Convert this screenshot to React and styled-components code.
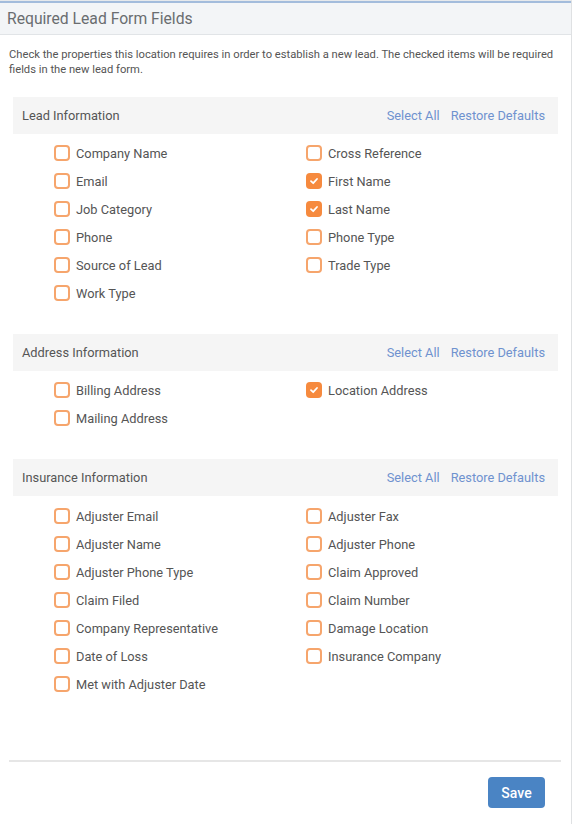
import React from "react";
import styled, { createGlobalStyle } from "styled-components";

const Global = createGlobalStyle`
  html, body { margin: 0; padding: 0; background: #fff; }
  body { font-family: Roboto, "Noto Sans", Arial, sans-serif; }
  * { box-sizing: border-box; }
`;

const Panel = styled.div`
  width: 572px;
  min-height: 824px;
  border-right: 1px solid #dfe1e3;
  border-top: 1px solid #e6e9ec;
  background: #fff;
`;

const Header = styled.div`
  border-top: 2px solid #a3bcdc;
  background: #f3f5f7;
  border-bottom: 1px solid #e1e4e7;
  height: 34px;
  display: flex;
  align-items: center;
  padding-left: 7px;
`;

const Title = styled.h2`
  margin: 0;
  font-size: 15.7px;
  font-weight: 400;
  color: #6a6d70;
`;

const Description = styled.p`
  margin: 12px 0 0;
  padding: 0 9px;
  font-size: 11.2px;
  line-height: 15px;
  color: #555;
`;

const Body = styled.div`
  padding: 0 13px;
`;

const Section = styled.section`
  margin-top: ${(p) => p.$top}px;
`;

const Band = styled.div`
  height: 37px;
  background: #f5f5f5;
  display: flex;
  align-items: center;
  padding: 0 13px 0 9px;
`;

const BandTitle = styled.div`
  flex: 1;
  font-size: 12.8px;
  color: #555;
`;

const Link = styled.a`
  font-size: 12.8px;
  color: #6f92cf;
  cursor: pointer;
  & + & { margin-left: 11px; }
`;

const Grid = styled.div`
  display: grid;
  grid-template-columns: 252px 252px;
  grid-auto-rows: 28px;
  padding: ${(p) => p.$pad}px 0 0 41px;
`;

const Item = styled.label`
  display: flex;
  align-items: center;
  gap: 6px;
  font-size: 12.8px;
  color: #555;
  grid-column: ${(p) => p.$col};
  grid-row: ${(p) => p.$row};
`;

const Box = styled.span`
  width: 16px;
  height: 16px;
  border-radius: 4px;
  border: ${(p) => (p.$checked ? "none" : "2px solid #f6a56c")};
  background: ${(p) => (p.$checked ? "#f68a3e" : "#fff")};
  display: flex;
  align-items: center;
  justify-content: center;
  flex: none;
`;

const Footer = styled.div`
  margin: 62px 10px 0 9px;
  border-top: 2px solid #e6e6e6;
  display: flex;
  justify-content: flex-end;
  padding: 15px 16px 0 0;
`;

const SaveButton = styled.button`
  width: 57px;
  height: 31px;
  border: none;
  border-radius: 4px;
  background: #4a84c4;
  color: #fff;
  font-family: Roboto, Arial, sans-serif;
  font-size: 14px;
  font-weight: 500;
`;

const sections = [
  {
    title: "Lead Information",
    top: 20,
    pad: 5,
    left: ["Company Name", "Email", "Job Category", "Phone", "Source of Lead", "Work Type"],
    right: ["Cross Reference", "First Name", "Last Name", "Phone Type", "Trade Type"],
    checked: ["First Name", "Last Name"],
  },
  {
    title: "Address Information",
    top: 27,
    pad: 5,
    left: ["Billing Address", "Mailing Address"],
    right: ["Location Address"],
    checked: ["Location Address"],
  },
  {
    title: "Insurance Information",
    top: 27,
    pad: 6,
    left: [
      "Adjuster Email",
      "Adjuster Name",
      "Adjuster Phone Type",
      "Claim Filed",
      "Company Representative",
      "Date of Loss",
      "Met with Adjuster Date",
    ],
    right: [
      "Adjuster Fax",
      "Adjuster Phone",
      "Claim Approved",
      "Claim Number",
      "Damage Location",
      "Insurance Company",
    ],
    checked: [],
  },
];

const Check = () => (
  <svg width="10" height="10" viewBox="0 0 10 10">
    <path d="M2 5.2 L4.2 7.2 L8 3" fill="none" stroke="#fff" strokeWidth="1.8" strokeLinecap="round" strokeLinejoin="round" />
  </svg>
);

const Field = ({ name, col, row, checked }) => (
  <Item $col={col} $row={row}>
    <Box $checked={checked}>{checked && <Check />}</Box>
    {name}
  </Item>
);

export default function App() {
  return (
    <>
      <Global />
      <Panel>
        <Header>
          <Title>Required Lead Form Fields</Title>
        </Header>
        <Description>
          Check the properties this location requires in order to establish a new lead. The checked items will be required
          fields in the new lead form.
        </Description>
        <Body>
          {sections.map((s) => (
            <Section key={s.title} $top={s.top}>
              <Band>
                <BandTitle>{s.title}</BandTitle>
                <Link>Select All</Link>
                <Link>Restore Defaults</Link>
              </Band>
              <Grid $pad={s.pad}>
                {s.left.map((n, i) => (
                  <Field key={n} name={n} col={1} row={i + 1} checked={s.checked.includes(n)} />
                ))}
                {s.right.map((n, i) => (
                  <Field key={n} name={n} col={2} row={i + 1} checked={s.checked.includes(n)} />
                ))}
              </Grid>
            </Section>
          ))}
        </Body>
        <Footer>
          <SaveButton>Save</SaveButton>
        </Footer>
      </Panel>
    </>
  );
}
